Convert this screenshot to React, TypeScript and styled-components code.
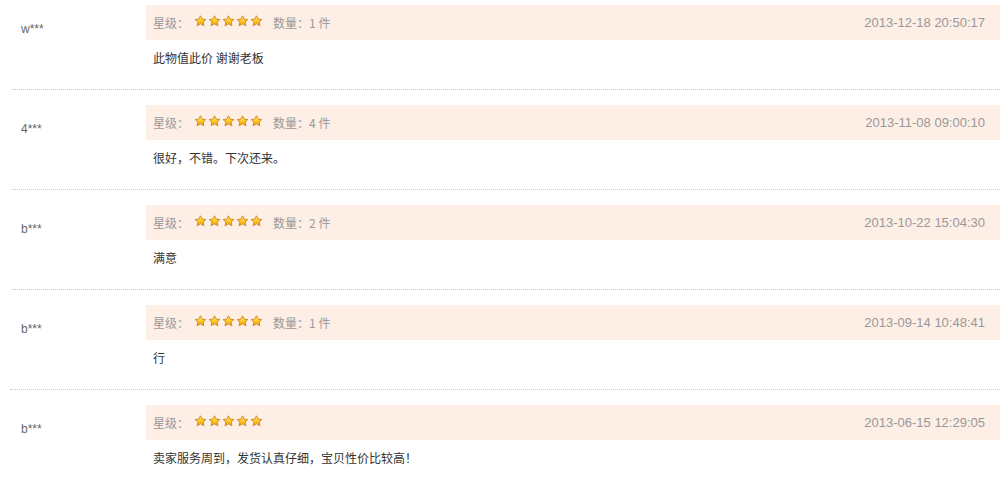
import React from 'react';
import styled, { createGlobalStyle } from 'styled-components';

const GlobalStyle = createGlobalStyle`
  html, body {
    margin: 0;
    padding: 0;
    background: #fff;
  }
  body {
    font-family: "Liberation Sans", "Noto Sans CJK SC", sans-serif;
    font-size: 12px;
  }
`;

type Review = {
  user: string;
  count?: number;
  date: string;
  text: string;
  inset: number;
};

const reviews: Review[] = [
  { user: 'w***', count: 1, date: '2013-12-18 20:50:17', text: '此物值此价 谢谢老板', inset: 12 },
  { user: '4***', count: 4, date: '2013-11-08 09:00:10', text: '很好，不错。下次还来。', inset: 12 },
  { user: 'b***', count: 2, date: '2013-10-22 15:04:30', text: '满意', inset: 12 },
  { user: 'b***', count: 1, date: '2013-09-14 10:48:41', text: '行', inset: 10 },
  { user: 'b***', date: '2013-06-15 12:29:05', text: '卖家服务周到，发货认真仔细，宝贝性价比较高！', inset: 10 },
];

// left edge of the rating bar, measured from the page edge
const BAR_LEFT = 146;

const Star: React.FC = () => (
  <svg width="13" height="12" viewBox="0 0 13 12">
    <defs>
      <linearGradient id="sg" x1="0" y1="0" x2="0" y2="1">
        <stop offset="0" stopColor="#fff38a" />
        <stop offset="0.5" stopColor="#ffcc22" />
        <stop offset="1" stopColor="#f0a010" />
      </linearGradient>
    </defs>
    <path
      d="M6.5 0.8 L8.1 4.2 L11.9 4.5 L9 7 L9.9 10.8 L6.5 8.8 L3.1 10.8 L4 7 L1.1 4.5 L4.9 4.2 Z"
      fill="url(#sg)"
      stroke="#d98a1e"
      strokeWidth="1"
      strokeLinejoin="round"
    />
  </svg>
);

const App: React.FC = () => {
  return (
    <>
      <GlobalStyle />
      <List>
        {reviews.map((r, i) => (
          <Item key={i} inset={r.inset}>
            <User inset={r.inset}>{r.user}</User>
            <Main>
              <Bar>
                <Label>星级：</Label>
                <Stars>
                  {[0, 1, 2, 3, 4].map((s) => (
                    <Star key={s} />
                  ))}
                </Stars>
                {r.count !== undefined && <Label>数量：{r.count} 件</Label>}
                <Date>{r.date}</Date>
              </Bar>
              <Comment>{r.text}</Comment>
            </Main>
          </Item>
        ))}
      </List>
    </>
  );
};

const List = styled.div`
  width: 1000px;
`;

const Item = styled.div<{ inset: number }>`
  display: flex;
  margin-left: ${(p) => p.inset}px;
  padding: 15px 0 22px;
  border-bottom: 1px dotted #c8c8c8;

  &:first-child {
    padding-top: 5px;
  }
  &:last-child {
    border-bottom: none;
  }
`;

const User = styled.div<{ inset: number }>`
  width: ${(p) => BAR_LEFT - p.inset}px;
  flex-shrink: 0;
  box-sizing: border-box;
  padding: 15px 0 0 ${(p) => 21 - p.inset}px;
  line-height: 18px;
  color: #666;
`;

const Main = styled.div`
  flex: 1;
  display: flex;
  flex-direction: column;
`;

const Bar = styled.div`
  display: flex;
  align-items: center;
  height: 35px;
  padding: 0 15px 0 7px;
  background: #fdeee6;
  color: #999;
`;

const Label = styled.span`
  font-family: "Noto Sans CJK SC", sans-serif;
  color: #999;
  margin-right: 5px;
  white-space: nowrap;
`;

const Stars = styled.span`
  display: inline-flex;
  gap: 1px;
  margin-right: 10px;
  margin-top: -3px;
`;

const Date = styled.span`
  margin-left: auto;
  font-family: "Liberation Sans", sans-serif;
  font-size: 13px;
  color: #999;
`;

const Comment = styled.div`
  margin-top: 9px;
  padding-left: 7px;
  line-height: 18px;
  color: #333;
  font-family: "Noto Sans CJK SC", sans-serif;
`;

export default App;
